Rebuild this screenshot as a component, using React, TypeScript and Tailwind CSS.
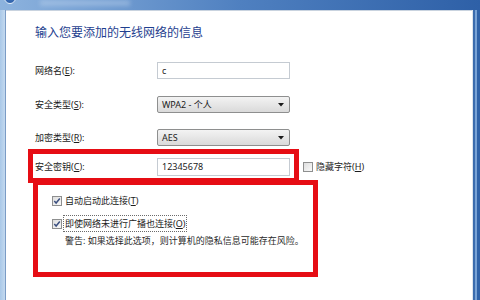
import React from "react";

const FONT = { fontFamily: '"Noto Sans", "Noto Sans CJK SC", sans-serif' };

function Acc({ pre, k }: { pre: string; k: string }) {
  return (
    <span>
      {pre}(<span className="underline underline-offset-[1px]">{k}</span>)
    </span>
  );
}

function Check({ checked }: { checked: boolean }) {
  return (
    <svg width="10" height="10" viewBox="0 0 10 10" className="shrink-0">
      <defs>
        <linearGradient id="cbg" x1="0" y1="0" x2="1" y2="1">
          <stop offset="0" stopColor="#dcdcdc" />
          <stop offset="1" stopColor="#fbfbfb" />
        </linearGradient>
      </defs>
      <rect x="0.5" y="0.5" width="9" height="9" fill="url(#cbg)" stroke="#8e8f8f" />
      {checked && (
        <path d="M2.3 5.1 L4.1 7 L7.8 2.6" fill="none" stroke="#3b4f7f" strokeWidth="1.5" />
      )}
    </svg>
  );
}

function Row({ label, children, mt }: { label: React.ReactNode; children: React.ReactNode; mt: string }) {
  return (
    <div className={`flex items-center ${mt}`}>
      <div className="w-[122px] text-[9px] leading-[14px] text-[#1c1c1c]">{label}</div>
      {children}
    </div>
  );
}

function Input({ value, h }: { value: string; h: string }) {
  return (
    <div className={`w-[133px] ${h} border border-[#c5cbd2] bg-white flex items-center pl-[4px] text-[9px] text-[#1c1c1c]`}>
      {value}
    </div>
  );
}

function Select({ value }: { value: string }) {
  return (
    <div className="w-[133px] h-[17px] border border-[#8e8f8f] rounded-[2px] bg-gradient-to-b from-[#f3f3f3] to-[#dadada] flex items-center pl-[4px] pr-[5px] text-[9px] text-[#1c1c1c]">
      <span className="flex-1">{value}</span>
      <svg width="6" height="4" viewBox="0 0 6 4">
        <path d="M0 0 H6 L3 3.5 Z" fill="#1a1a1a" />
      </svg>
    </div>
  );
}

export default function App() {
  return (
    <div className="w-[480px] h-[300px] flex flex-col overflow-hidden relative bg-white" style={FONT}>
      <div className="h-[10px] relative bg-gradient-to-r from-[#8db3de] via-[#4f80c0] to-[#2e60a7] shrink-0">
        <div className="absolute left-[4px] top-[-8px] w-[12px] h-[12px] rounded-full border border-[#e3eefa] bg-gradient-to-b from-[#5b8ccc] to-[#2b5ea8]" />
        <div className="absolute left-[40px] top-0 w-[90px] h-[6px] bg-[#c4d8ef] opacity-40 blur-[2px]" />
      </div>
      <div className="flex flex-1">
        <div className="w-[6px] bg-gradient-to-r from-[#a9c8e8] to-[#c3d9ef] border-r border-[#7b9cc6] shrink-0" />
        <div className="flex-1 bg-white border-t border-[#c9d3df] pl-[29px]">
          <div className="mt-[14px] h-[16px] text-[12px] leading-[16px] text-[#1f3f8f]">
            输入您要添加的无线网络的信息
          </div>
          <Row label={<><Acc pre="网络名" k="E" />:</>} mt="mt-[21px]">
            <Input value="c" h="h-[17px]" />
          </Row>
          <Row label={<><Acc pre="安全类型" k="S" />:</>} mt="mt-[17px]">
            <Select value="WPA2 - 个人" />
          </Row>
          <Row label={<><Acc pre="加密类型" k="R" />:</>} mt="mt-[16px]">
            <Select value="AES" />
          </Row>
          <Row label={<><Acc pre="安全密钥" k="C" />:</>} mt="mt-[12px]">
            <Input value="12345678" h="h-[18px]" />
            <div className="ml-[13px] flex items-center gap-[3px] text-[9px] text-[#1c1c1c]">
              <Check checked={false} />
              <Acc pre="隐藏字符" k="H" />
            </div>
          </Row>
          <div className="mt-[18px] pl-[17px] h-[14px] flex items-center gap-[3px] text-[9px] text-[#1c1c1c]">
            <Check checked />
            <Acc pre="自动启动此连接" k="T" />
          </div>
          <div className="mt-[7px] pl-[17px] h-[17px] flex items-center gap-[1px] text-[9px] text-[#1c1c1c]">
            <Check checked />
            <span className="border border-dotted border-[#6b6b6b] px-[1px] leading-[15px]">
              <Acc pre="即使网络未进行广播也连接" k="O" />
            </span>
          </div>
          <div className="mt-[2px] pl-[30px] h-[14px] text-[9px] leading-[14px] text-[#2a2a2a]">
            警告: 如果选择此选项，则计算机的隐私信息可能存在风险。
          </div>
        </div>
        <div className="w-[8px] flex shrink-0">
          <div className="w-[1px] bg-[#dfe5ec]" />
          <div className="w-[2px] bg-[#3b6cae]" />
          <div className="w-[2px] bg-[#79a3d6]" />
          <div className="w-[3px] bg-[#2f62a8]" />
        </div>
      </div>
      <div className="absolute left-[28px] top-[149px] w-[271px] h-[34px] border-[5px] border-[#e60d14]" />
      <div className="absolute left-[33px] top-[180px] w-[285px] h-[97px] border-[5px] border-[#e60d14]" />
    </div>
  );
}
